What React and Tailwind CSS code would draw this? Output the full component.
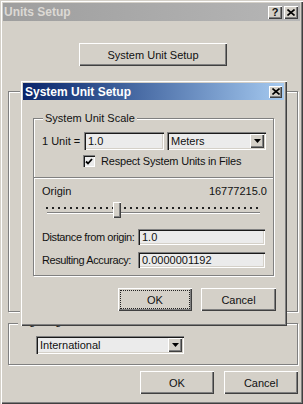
import React from 'react';

const raised =
  'bg-[#d4d0c8] shadow-[inset_1px_1px_0_#ffffff,inset_-1px_-1px_0_#404040,inset_-2px_-2px_0_#808080]';
const sunken =
  'bg-[#ebebeb] shadow-[inset_1px_1px_0_#808080,inset_2px_2px_0_#1a1a1a,inset_-1px_-1px_0_#ffffff,inset_-2px_-2px_0_#d4d0c8]';
const etched = 'border border-[#808080] shadow-[inset_1px_1px_0_#ffffff,1px_1px_0_#ffffff]';

const Arrow = () => (
  <div className={`${raised} w-[14px] h-[14px] flex items-center justify-center`}>
    <svg width="7" height="4" viewBox="0 0 7 4">
      <path d="M0 0h7L3.5 4z" fill="#000" />
    </svg>
  </div>
);

const Combo = ({ value, className }) => (
  <div className={`${sunken} ${className} flex items-center justify-between pl-[4px] pr-[2px]`}>
    <span>{value}</span>
    <Arrow />
  </div>
);

const Field = ({ value, className }) => (
  <div className={`${sunken} ${className} flex items-center pl-[4px]`}>{value}</div>
);

const Button = ({ label, className, focused }) => (
  <div className={`${raised} ${className} relative flex items-center justify-center`}>
    {focused && <div className="absolute inset-[2px] border border-dotted border-[#222]" />}
    <span className="relative">{label}</span>
  </div>
);

const CloseGlyph = () => (
  <svg width="8" height="7" viewBox="0 0 8 7">
    <path d="M0.5 0.5L7.5 6.5M7.5 0.5L0.5 6.5" stroke="#000" strokeWidth="1.6" />
  </svg>
);

const Slider = () => {
  const dots = [];
  for (let x = 1; x < 217; x += 6) dots.push(x);
  return (
    <div className="relative w-[217px] h-[17px] ml-[11px]">
      <svg width="217" height="17" viewBox="0 0 217 17" className="block">
        {dots.map((x) => (
          <rect key={x} x={x} y="5" width="2" height="2" fill="#222" />
        ))}
        <rect x="2" y="10" width="213" height="1" fill="#808080" />
        <rect x="2" y="11" width="213" height="1" fill="#ffffff" />
      </svg>
      <div className={`${raised} absolute left-[68px] top-0 w-[8px] h-[16px]`} />
    </div>
  );
};

export default function App() {
  return (
    <div className="relative w-[303px] h-[404px] bg-[#d4d0c8] p-[3px] flex flex-col text-[11px] leading-[12px] text-[#111] font-['Liberation_Sans',Arial,sans-serif] shadow-[inset_1px_1px_0_#d4d0c8,inset_2px_2px_0_#ffffff,inset_-1px_-1px_0_#404040,inset_-2px_-2px_0_#808080] overflow-hidden">
      {/* outer title bar (inactive) */}
      <div className="h-[18px] bg-gradient-to-r from-[#9e9e9e] to-[#b6b6b6] flex items-center justify-between pl-[1px] pr-[2px]">
        <span className="font-bold text-[12px] text-[#dcd9d4]">Units Setup</span>
        <div className="flex gap-[2px]">
          <div className={`${raised} w-[14px] h-[13px] flex items-center justify-center font-bold text-[11px]`}>?</div>
          <div className={`${raised} w-[14px] h-[13px] flex items-center justify-center`}>
            <CloseGlyph />
          </div>
        </div>
      </div>

      <Button label="System Unit Setup" className="mt-[22px] ml-[76px] w-[148px] h-[23px]" />

      {/* Display Unit Scale group, covered by the child dialog */}
      <div className={`${etched} mt-[25px] ml-[5px] w-[290px] h-[221px]`} />

      {/* Lighting Units */}
      <div className={`${etched} relative mt-[11px] ml-[5px] w-[290px] h-[42px] pt-[12px] pl-[27px]`}>
        <span className="absolute -top-[9px] left-[9px] px-[2px] bg-[#d4d0c8] tracking-[0.4px]">Lighting Units</span>
        <Combo value="International" className="w-[148px] h-[18px]" />
      </div>

      <div className="mt-[6px] flex justify-end gap-[10px] pr-[2px]">
        <Button label="OK" className="w-[74px] h-[23px]" />
        <Button label="Cancel" className="w-[74px] h-[23px]" />
      </div>

      {/* System Unit Setup child dialog */}
      <div className="absolute left-[20px] top-[80px] w-[267px] h-[246px] bg-[#d4d0c8] p-[3px] flex flex-col shadow-[inset_1px_1px_0_#d4d0c8,inset_2px_2px_0_#ffffff,inset_-1px_-1px_0_#404040,inset_-2px_-2px_0_#808080]">
        <div className="h-[17px] bg-gradient-to-r from-[#0a246a] to-[#a6caf0] flex items-center justify-between pl-[2px] pr-[2px]">
          <span className="font-bold text-[12px] text-white">System Unit Setup</span>
          <div className={`${raised} w-[13px] h-[12px] flex items-center justify-center`}>
            <CloseGlyph />
          </div>
        </div>

        <div className={`${etched} relative mt-[18px] ml-[10px] w-[241px] h-[158px] flex flex-col`}>
          <span className="absolute -top-[7px] left-[9px] px-[2px] bg-[#d4d0c8]">System Unit Scale</span>

          <div className="mt-[13px] h-[18px] flex items-center pl-[8px]">
            <span className="w-[42px] whitespace-nowrap">1 Unit =</span>
            <Field value="1.0" className="w-[80px] h-[18px]" />
            <Combo value="Meters" className="ml-[3px] w-[99px] h-[18px]" />
          </div>

          <div className="mt-[5px] h-[12px] flex items-center pl-[49px]">
            <div className="w-[12px] h-[12px] bg-[#ebebeb] shadow-[inset_1px_1px_0_#808080,inset_2px_2px_0_#1a1a1a,inset_-1px_-1px_0_#ffffff] flex items-center justify-center">
              <svg width="8" height="7" viewBox="0 0 8 7">
                <path d="M1 3.5L3 5.5L7 1" stroke="#000" strokeWidth="1.8" fill="none" />
              </svg>
            </div>
            <span className="ml-[6px] whitespace-nowrap tracking-[-0.2px]">Respect System Units in Files</span>
          </div>

          <div className="mt-[10px] h-[2px] border-t border-[#808080] bg-white" />

          <div className="mt-[6px] h-[12px] flex items-center justify-between pl-[8px] pr-[6px]">
            <span>Origin</span>
            <span>16777215.0</span>
          </div>

          <div className="mt-[5px]">
            <Slider />
          </div>

          <div className="mt-[10px] h-[16px] flex items-center pl-[8px]">
            <span className="w-[96px] shrink-0 whitespace-nowrap tracking-[-0.4px]">Distance from origin:</span>
            <Field value="1.0" className="w-[127px] h-[16px]" />
          </div>

          <div className="mt-[7px] h-[16px] flex items-center pl-[8px]">
            <span className="w-[96px] shrink-0 whitespace-nowrap tracking-[-0.4px]">Resulting Accuracy:</span>
            <Field value="0.0000001192" className="w-[127px] h-[16px]" />
          </div>
        </div>

        <div className="mt-[12px] flex justify-end gap-[9px] pr-[8px]">
          <Button label="OK" focused className="w-[74px] h-[23px]" />
          <Button label="Cancel" className="w-[75px] h-[23px]" />
        </div>
      </div>
    </div>
  );
}
